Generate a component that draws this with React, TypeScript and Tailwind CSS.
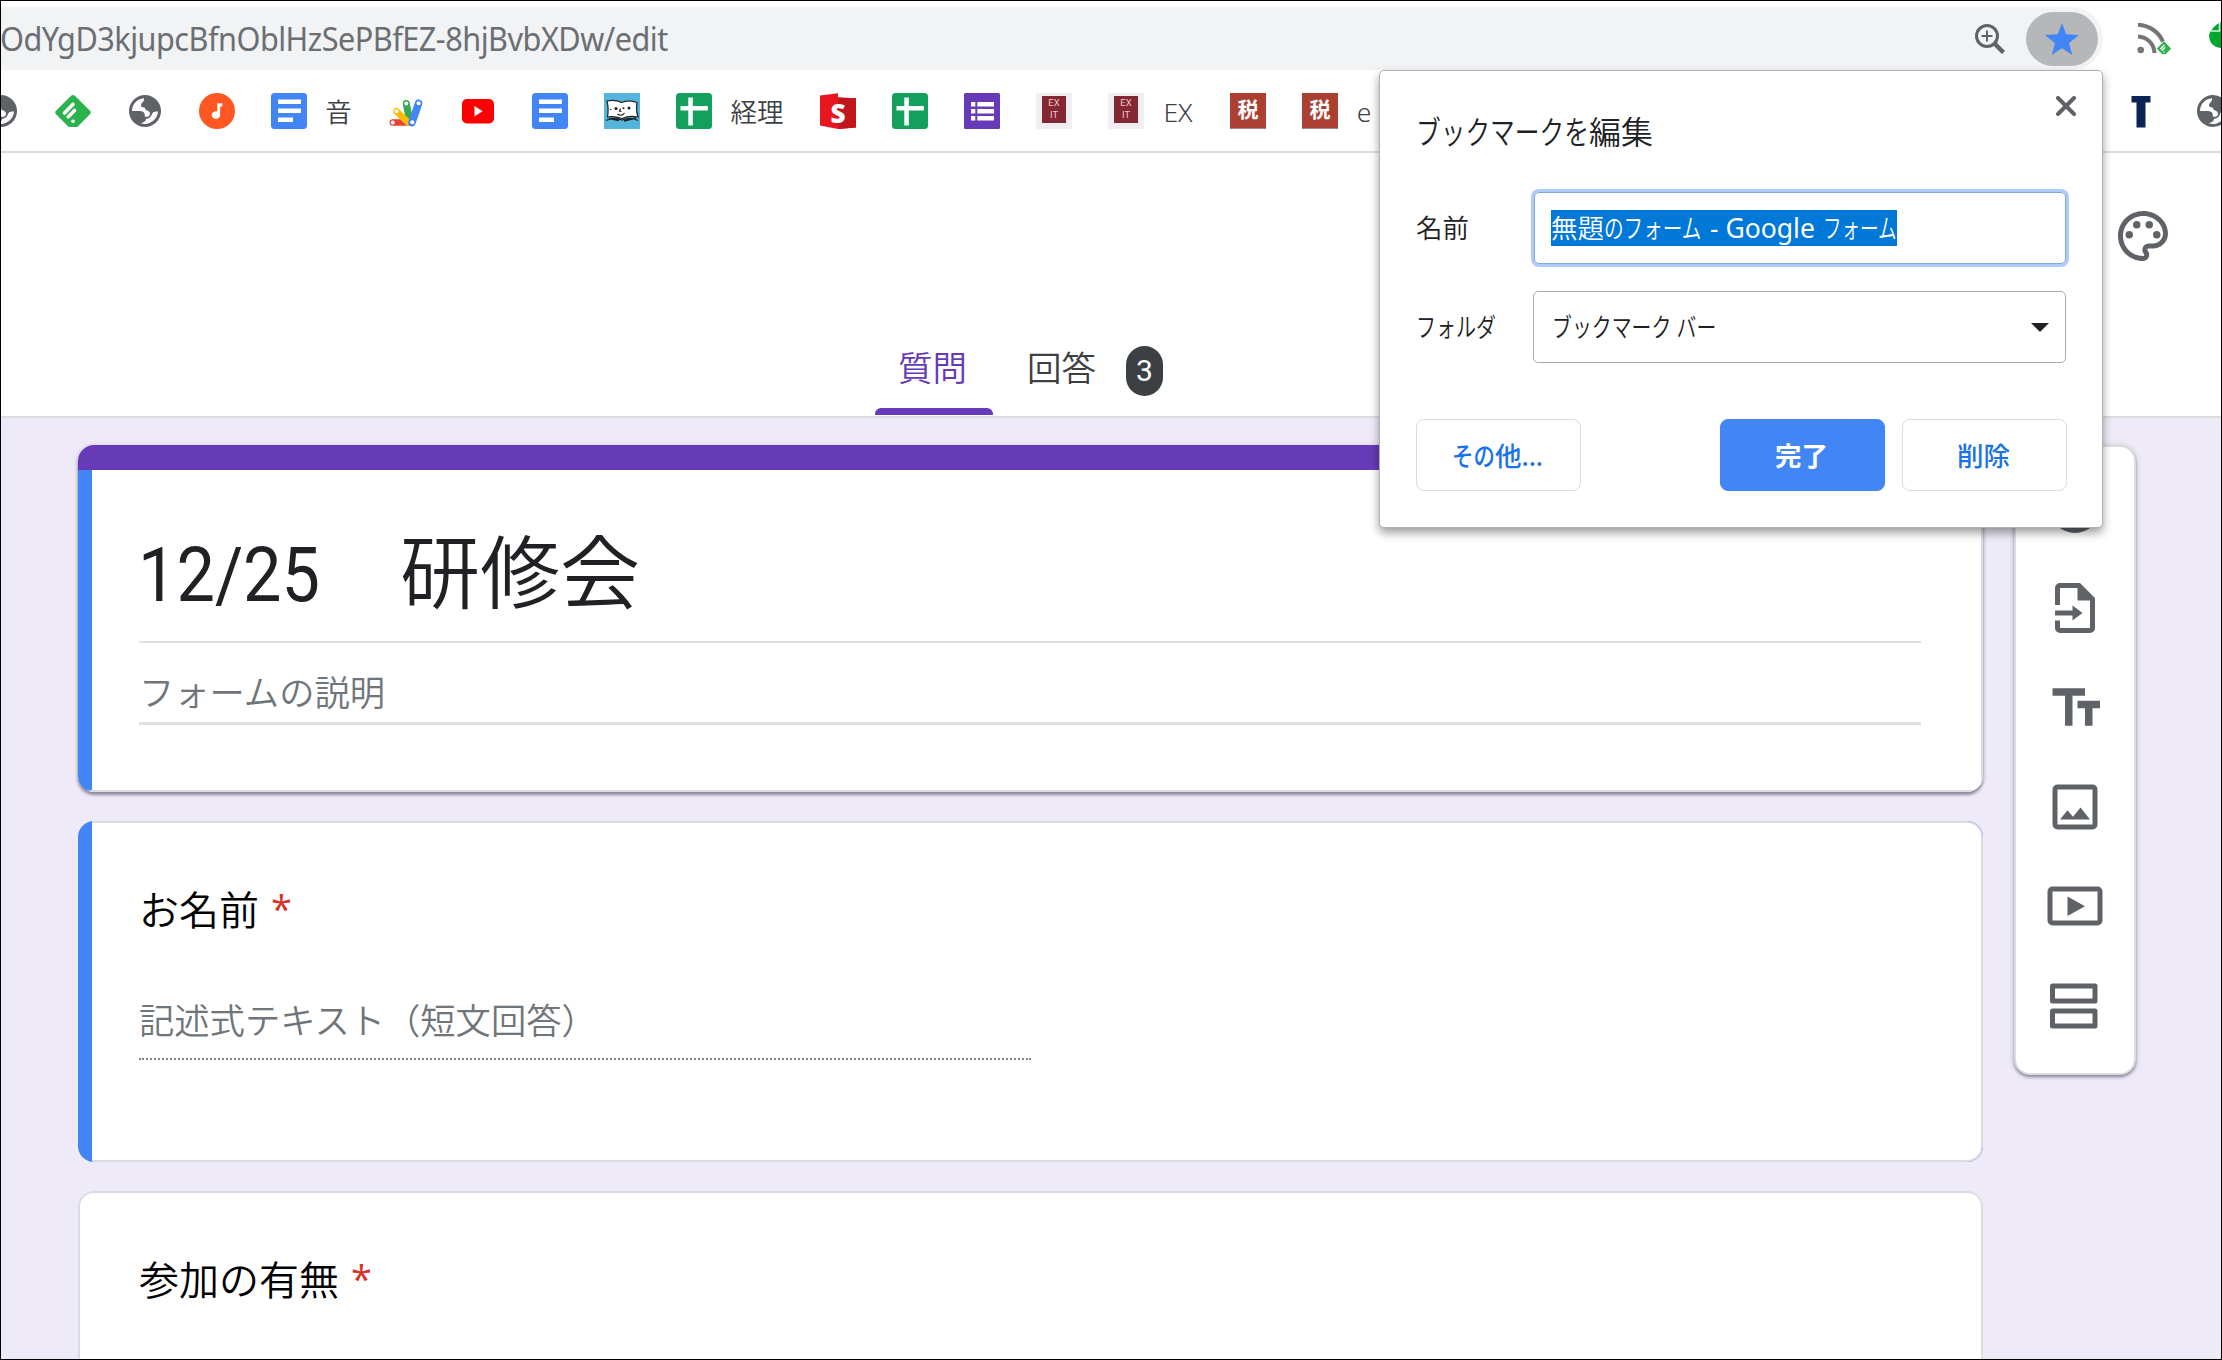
import type { ReactNode } from "react";
import clsx from "clsx";

function GlobeIcon() {
  return (
    <svg viewBox="0 0 36 36" className="size-9">
      <circle cx="18" cy="18" r="16" fill="#5f6368" />
      <path
        d="M17 5.200C10 5.800 5.200 11 5 18h7.500c3.300 0 5.300 1.400 5.300 4.200v1.600h2.400c2.600 0 3.600-3.200 2-5-1.400-1.600-4-1-4-3.200s-4.200-.4-4.200-3.400c0-2.600 3.600-3.200 3-7z"
        fill="#fff"
      />
      <path
        d="M31 18.500c-.2 6.200-5.400 11.800-12.400 12.500-1.600 0-3.600-.2-4.600-.8l3.400-1.400c1.400-.6 1-2.600 2.200-3 2.600-.8 4.800-2 5.200-4.400.4-2.200 3-3.400 6.200-2.900z"
        fill="#fff"
      />
    </svg>
  );
}

function FeedlyIcon({ className = "size-9" }: { className?: string }) {
  return (
    <svg viewBox="0 0 36 36" className={className}>
      <path
        d="M15.600 3.200a3.500 3.500 0 0 1 4.800 0L35 17.800a2.500 2.500 0 0 1 0 3.400L22.800 33.400a2.500 2.500 0 0 1-1.800.7h-6a2.500 2.500 0 0 1-1.800-.7L1 21.200a2.500 2.500 0 0 1 0-3.400z"
        fill="#2bb24c"
      />
      <g stroke="#fff" strokeWidth="3.600" strokeLinecap="round">
        <path d="M9.500 20 18 11.200" />
        <path d="M13.300 23.800 19.500 17.500" />
        <path d="M18 28.200h.1" />
      </g>
    </svg>
  );
}

function MusicIcon() {
  return (
    <svg viewBox="0 0 36 36" className="size-9">
      <circle cx="18" cy="18" r="18" fill="#ff5722" />
      <path d="M18.300 10.200h5v3.400h-2.200v8.600a4.200 3.800 0 1 1-2.800-3.600z" fill="#fff" />
    </svg>
  );
}

function DocsIcon() {
  return (
    <svg viewBox="0 0 36 36" className="size-9">
      <rect width="36" height="36" rx="3.500" fill="#4285f4" />
      <path d="M7 6.500h23v4.500H7zM7 15.500h23V20H7zM7 24.500h15V29H7z" fill="#fff" />
    </svg>
  );
}

function AppsScriptIcon() {
  return (
    <svg viewBox="0 0 36 36" className="size-9" strokeLinecap="round">
      <path d="M4.800 29.600H20" stroke="#ea4335" strokeWidth="6.500" />
      <path d="m18.300 10.500 3 16" stroke="#34a853" strokeWidth="7" />
      <path d="m8.500 18.300 12 11.500" stroke="#fbbc04" strokeWidth="6.500" />
      <path d="M30.600 10.200 24 29.600" stroke="#4285f4" strokeWidth="7.500" />
      <g fill="#fff">
        <circle cx="4.800" cy="29.600" r="2" />
        <circle cx="8.500" cy="18.300" r="2" />
        <circle cx="18.300" cy="10.500" r="2" />
        <circle cx="30.600" cy="10.300" r="2" />
        <circle cx="24.300" cy="29.300" r="2" />
      </g>
    </svg>
  );
}

function YoutubeIcon() {
  return (
    <svg viewBox="0 0 36 36" className="size-9">
      <rect x="2" y="6" width="32" height="24.500" rx="5" fill="#f00" />
      <path d="M14.500 13v10.500l8.200-5.200z" fill="#fff" />
    </svg>
  );
}

function BookIcon() {
  return (
    <svg viewBox="0 0 36 36" className="size-9">
      <path fill="#54b4dc" d="M0 0h36v36H0z" />
      <path
        d="M3 8c5-1.200 10-.8 14.500 1.500C22 7.500 27 7 33 9.500c-.8 4.500-.8 9 1 14.500-5-1-11-1-16 1.500-5-1.800-10-2.500-14.500-1.500C4.500 18 4.300 13 3 8z"
        fill="#fff"
        stroke="#222"
        strokeWidth="1.200"
      />
      <path
        d="M2 27.500c5-2.500 11-2.500 16-.5 5-2 11-2.500 16 .5M5 25.500l10 2M20 28l12-3"
        fill="none"
        stroke="#222"
        strokeWidth="1.300"
      />
      <path d="M16.500 15.500l-1 2.500 2 .5M13.500 21c2.500 2 5.500 1.500 7-1" fill="none" stroke="#222" strokeWidth="1.200" />
      <g fill="#222">
        <circle cx="12" cy="15.500" r="1.500" />
        <circle cx="25" cy="15" r="1.500" />
        <circle cx="6.800" cy="16.500" r=".7" />
        <circle cx="19.500" cy="15.200" r="1" />
      </g>
    </svg>
  );
}

function SheetsIcon() {
  return (
    <svg viewBox="0 0 36 36" className="size-9">
      <rect width="36" height="36" rx="3.500" fill="#12a05c" />
      <path d="M12.300 4.500h4.500v8.500h15v4.500h-15v15h-4.500v-15H4.500V13h7.800z" fill="#fff" />
    </svg>
  );
}

function SketchIcon() {
  return (
    <div className="grid size-9 place-items-center *:col-start-1 *:row-start-1">
      <svg viewBox="0 0 36 36" className="size-9">
        <path d="M0 2.500 18 .3v4.300L36 5.200V34.500L18 36 0 32.500z" fill="#e8171f" />
        <path d="M18 4.600 36 5.200V34.500L18 36z" fill="#c0171f" />
      </svg>
      <span className="relative pt-1 font-['Noto_Sans'] text-[26px] leading-8 font-black text-white">S</span>
    </div>
  );
}

function FormsIcon() {
  return (
    <svg viewBox="0 0 36 36" className="size-9">
      <rect width="36" height="36" rx="1.500" fill="#673ab7" />
      <path
        d="M7 9h4.300v4.500H7zM13.300 9H30v4.500H13.300zM7 16h4.300v4.500H7zM13.300 16H30v4.500H13.300zM7 23h4.300v4.500H7zM13.300 23H30v4.500H13.300z"
        fill="#fff"
      />
    </svg>
  );
}

function ExitIcon() {
  return (
    <div className="flex size-9 justify-center bg-[#f1eff1] pt-[3px]">
      <div className="h-[27px] w-6 bg-[#832833] pt-px text-center font-['Roboto'] text-[9.5px] leading-[12.5px] text-[#f3c4c8]">
        <div>EX</div>
        <div>IT</div>
      </div>
    </div>
  );
}

function TaxIcon() {
  return (
    <div className="flex size-9 items-center justify-center border-b border-[#9c8a86] bg-[#ab4032] font-['Noto_Sans_CJK_JP'] text-[21px] leading-none font-bold text-white">
      <span className="-mt-1">税</span>
    </div>
  );
}

function LetterTIcon() {
  return (
    <svg viewBox="0 0 36 36" className="size-9">
      <path d="M8.500 3h19v6.500h-5V34.500h-9V9.500h-5z" fill="#0b2355" />
    </svg>
  );
}

const bookmarks: { icon: ReactNode; label?: string; labelWidth?: string }[] = [
  { icon: <GlobeIcon /> },
  { icon: <FeedlyIcon /> },
  { icon: <GlobeIcon /> },
  { icon: <MusicIcon /> },
  { icon: <DocsIcon />, label: "音", labelWidth: "w-[27px]" },
  { icon: <AppsScriptIcon /> },
  { icon: <YoutubeIcon /> },
  { icon: <DocsIcon /> },
  { icon: <BookIcon /> },
  { icon: <SheetsIcon />, label: "経理", labelWidth: "w-[54px]" },
  { icon: <SketchIcon /> },
  { icon: <SheetsIcon /> },
  { icon: <FormsIcon /> },
  { icon: <ExitIcon /> },
  { icon: <ExitIcon />, label: "EX", labelWidth: "w-8" },
  { icon: <TaxIcon /> },
  { icon: <TaxIcon />, label: "e", labelWidth: "w-4" },
];

function AddressBar() {
  return (
    <div className="flex h-[70px] shrink-0 items-center pt-[7px]">
      <div className="flex h-[63px] w-[2103px] shrink-0 items-center rounded-r-full bg-[#f1f3f4] pr-[5px]">
        <span className="origin-left scale-x-[0.929] text-[33px] leading-none tracking-[-0.55px] whitespace-nowrap text-[#6b6e72]">
          OdYgD3kjupcBfnOblHzSePBfEZ-8hjBvbXDw/edit
        </span>
        <svg viewBox="0 0 32 32" className="mr-5 ml-auto size-8" fill="none" stroke="#5f6368">
          <circle cx="13" cy="13" r="10.500" strokeWidth="3" />
          <path d="M20.500 20.500 29.500 29.500" strokeWidth="4.500" />
          <path d="M13 7.500v11M7.500 13h11" strokeWidth="2" />
        </svg>
        <div className="flex h-[54px] w-[72px] items-center justify-center rounded-full bg-[#b6b7b8]">
          <svg viewBox="0 0 34 32" className="h-8 w-[34px]">
            <path d="m17 0 4.200 11.300L34 12l-10 8.200L27.300 32 17 25.300 6.700 32 10 20.200 0 12l12.800-.7z" fill="#4285f4" />
          </svg>
        </div>
      </div>
      <div className="relative ml-[33px] size-9">
        <svg viewBox="0 0 36 36" className="size-9" fill="none" stroke="#757575" strokeWidth="4">
          <circle cx="4.700" cy="29" r="3.300" fill="#757575" stroke="none" />
          <path d="M2 15.500c9 .5 16 7 16.500 16.500M2 3.800c12 .7 21 7.500 25 17" />
        </svg>
        <FeedlyIcon className="absolute right-px bottom-0.5 size-[14px]" />
      </div>
      <svg viewBox="0 0 30 28" className="mb-2 ml-[37px] h-7 w-[30px] shrink-0">
        <path d="M13 1h12v26H13C5 27 0 22 0 14 1 10 6 3 13 1z" fill="#00a82d" />
        <path d="M2 10h8.500V2" fill="none" stroke="#d5f3dc" strokeWidth="1.500" />
      </svg>
    </div>
  );
}

function BookmarksBar() {
  return (
    <div className="flex h-[83px] shrink-0 items-center border-b-2 border-[#dadce0]">
      <div className="-ml-[17px] flex items-center gap-9">
        {bookmarks.map(({ icon, label, labelWidth }, i) => (
          <div key={i} className="flex items-center gap-[18px]">
            {icon}
            {label && (
              <span
                className={clsx(
                  "pt-0.5 text-center text-[26.5px] leading-9 font-[350] whitespace-nowrap text-[#3c4043]",
                  labelWidth
                )}
              >
                {label}
              </span>
            )}
          </div>
        ))}
      </div>
      <div className="-mr-[9px] ml-auto flex gap-9">
        <LetterTIcon />
        <GlobeIcon />
      </div>
    </div>
  );
}

function FormHeader() {
  return (
    <header className="flex h-[265px] shrink-0 items-end border-b-2 border-[#dadce0] bg-white pl-[875px] text-[34.500px] leading-[50px]">
      <div className="flex h-[70px] w-[118px] flex-col items-center justify-between pb-px text-[#673ab7]">
        <span className="-mt-[3px] pr-[3px] font-[350]">質問</span>
        <div className="h-[7px] w-full rounded-t-md bg-[#673ab7]" />
      </div>
      <div className="ml-[34px] flex h-[70px] items-start">
        <span className="-mt-[3px] font-[350] text-[#3c4043]">回答</span>
        <span className="ml-[30px] flex h-[50px] w-[37px] items-center justify-center rounded-full bg-[#3c4043] font-['Roboto'] text-[30px] text-white">
          3
        </span>
      </div>
      <svg viewBox="0 0 24 24" className="mr-[49px] mb-[150px] ml-auto size-[60px]" fill="#5f6368">
        <path d="M12 22C6.490 22 2 17.510 2 12S6.490 2 12 2s10 4.040 10 9c0 3.310-2.690 6-6 6h-1.770c-.28 0-.5.22-.5.5 0 .12.05.23.13.33.41.47.64 1.060.64 1.670A2.500 2.500 0 0 1 12 22zm0-18c-4.410 0-8 3.590-8 8s3.590 8 8 8c.28 0 .5-.22.5-.5a.54.54 0 0 0-.14-.35c-.41-.46-.63-1.050-.63-1.650a2.500 2.500 0 0 1 2.500-2.500H16c2.210 0 4-1.790 4-4 0-3.860-3.590-7-8-7z" />
        <circle cx="6.500" cy="11.500" r="1.500" />
        <circle cx="9.500" cy="7.500" r="1.500" />
        <circle cx="14.500" cy="7.500" r="1.500" />
        <circle cx="17.500" cy="11.500" r="1.500" />
      </svg>
    </header>
  );
}

function QuestionTitle({ children }: { children: ReactNode }) {
  return (
    <h2 className="flex items-start text-[40px] leading-[48px] font-[350] text-black">
      {children}
      <span className="ml-3 -mt-0.5 font-['Open_Sans'] text-[38px] font-normal text-[#d93025]">*</span>
    </h2>
  );
}

function TitleCard() {
  return (
    <section className="flex h-[347px] shrink-0 flex-col overflow-hidden rounded-2xl bg-white shadow-[0_3px_3px_rgba(60,50,80,0.45),0_1px_4px_rgba(60,50,80,0.25)]">
      <div className="h-[25px] bg-[#673ab7]" />
      <div className="flex-1 border-r-2 border-b-2 border-l-14 border-[#dadce0] border-l-[#4285f4] pt-[54px] pr-[60px] pl-[47px]">
        <div className="flex h-[119px] border-b-2 border-[#e0e0e0] text-[#202124]">
          <span className="w-[261px]">
            <span className="-ml-px inline-block origin-left scale-x-[0.9] font-['Roboto'] text-[76px] leading-[103px]">
              12/25
            </span>
          </span>
          <span className="text-[80px] leading-[94px] font-[350]">研修会</span>
        </div>
        <div className="h-[82px] border-b-3 border-[#e0e0e0] pt-6 text-[35.3px] leading-[50px] font-[350] text-[#70757a]">
          フォームの説明
        </div>
      </div>
    </section>
  );
}

function NameCard() {
  return (
    <section className="flex h-[341px] shrink-0 overflow-hidden rounded-2xl bg-[#4285f4] pl-[14px]">
      <div className="flex-1 rounded-r-2xl border-y-2 border-r-2 border-[#dadce0] bg-white pt-[63px] pl-[47px]">
        <QuestionTitle>お名前</QuestionTitle>
        <div className="mt-[61px] h-[65px] w-[892px] border-b-2 border-dotted border-[#80868b] text-[35.3px] leading-[50px] font-[350] text-[#70757a]">
          記述式テキスト（短文回答）
        </div>
      </div>
    </section>
  );
}

function AttendanceCard() {
  return (
    <section className="h-[341px] shrink-0 rounded-2xl border-2 border-[#dadce0] bg-white pt-[63px] pl-[59px]">
      <QuestionTitle>参加の有無</QuestionTitle>
    </section>
  );
}

const sideIcons = [
  "M12 2a10 10 0 1 0 0 20 10 10 0 0 0 0-20zm0 18a8 8 0 1 1 0-16 8 8 0 0 1 0 16zm1-13h-2v4H7v2h4v4h2v-4h4v-2h-4z",
  "M14 2H6a2 2 0 0 0-2 2v6.800h2V4h7v5h5v11H6v-3H4v3a2 2 0 0 0 2 2h12a2 2 0 0 0 2-2V8zM4 13v2h7v2l4-3-4-3v2z",
  "M3 4.500v3h5v12h3v-12h5v-3zM22 9.500h-9v3h3v7h3v-7h3z",
  "M5 3a2 2 0 0 0-2 2v14a2 2 0 0 0 2 2h14a2 2 0 0 0 2-2V5a2 2 0 0 0-2-2zm0 2h14v14H5zM14.200 12.200l-3 3.700-2.200-2.600L6 17h12z",
  "M3 4.200a2 2 0 0 0-2 2v11.600a2 2 0 0 0 2 2h18a2 2 0 0 0 2-2V6.200a2 2 0 0 0-2-2zm0 2h18v11.600H3zM9 8.200v7.800l7-3.900z",
  "M3 3a1 1 0 0 0-1 1v6a1 1 0 0 0 1 1h17a1 1 0 0 0 1-1V4a1 1 0 0 0-1-1zm1 2h15v4H4zM3 13a1 1 0 0 0-1 1v6a1 1 0 0 0 1 1h17a1 1 0 0 0 1-1v-6a1 1 0 0 0-1-1zm1 2h15v4H4z",
];

function SideToolbar() {
  return (
    <aside className="ml-[31px] flex h-[630px] w-[122px] shrink-0 flex-col items-center gap-[39.5px] rounded-2xl border-2 border-[#dadce0] bg-white pt-[31px] shadow-[0_2px_3px_rgba(60,50,80,0.5),0_1px_6px_rgba(60,50,80,0.15)]">
      {sideIcons.map((d) => (
        <svg key={d} viewBox="0 0 24 24" className="size-[60px] shrink-0" fill="#5f6368" fillRule="evenodd">
          <path d={d} />
        </svg>
      ))}
    </aside>
  );
}

function DialogButton({ className, children }: { className: string; children: ReactNode }) {
  return (
    <button
      className={clsx(
        "flex h-[72px] w-[165px] items-center justify-center rounded-lg border pt-0.5 pr-0.5 text-[26.500px] leading-none",
        className
      )}
    >
      {children}
    </button>
  );
}

function BookmarkDialog() {
  return (
    <div className="absolute top-[70px] left-[1379px] h-[458px] w-[724px] rounded-[5px] border border-[#b0b2b5] bg-white pr-[35px] pl-9 text-[#202124] shadow-[0_5px_10px_rgba(0,0,0,0.38)]">
      <div className="flex justify-between">
        <h1 className="flex pt-[38px] text-[32px] leading-[46px] font-[350]">
          <span className="w-[173px] origin-left scale-x-[0.772] whitespace-nowrap">ブックマークを</span>
          編集
        </h1>
        <svg viewBox="0 0 20 20" className="mt-[25px] -mr-[9px] size-5" stroke="#5f6368" strokeWidth="4" strokeLinecap="round">
          <path d="m2 2 16 16M18 2 2 18" />
        </svg>
      </div>

      <div className="mt-[37px] flex items-center text-[26.500px] leading-9">
        <label className="w-[118px] font-[350]">名前</label>
        <div className="flex h-[72px] w-[532px] items-center rounded-[5px] border border-[#85a6e0] pl-4 ring-3 ring-[#aecbfa]">
          <div className="flex h-9 w-[346px] bg-[#0078d7] font-[350] whitespace-nowrap text-white">
            無題
            <span className="w-[98px] origin-left scale-x-[0.74]">のフォーム</span>
            <span className="w-[121px] pl-2 font-normal">- Google</span>
            <span className="w-[74px] origin-left scale-x-[0.7]">フォーム</span>
          </div>
        </div>
      </div>

      <div className="mt-[27px] flex items-center text-[26px] leading-9 font-[350]">
        <label className="w-[117px]">
          <span className="inline-block origin-left scale-x-[0.77]">フォルダ</span>
        </label>
        <div className="flex h-[72px] w-[533px] items-center justify-between rounded-[5px] border border-[#a8aaad] pr-[16px] pl-[18px]">
          <span className="origin-left scale-x-[0.765]">ブックマーク バー</span>
          <svg viewBox="0 0 18 9" className="h-[9px] w-[18px]">
            <path d="M0 0h18l-9 9z" fill="#202124" />
          </svg>
        </div>
      </div>

      <div className="mt-14 flex">
        <DialogButton className="border-[#dadce0] font-medium text-[#1a73e8]">
          <span className="w-[43px] origin-left scale-x-[0.81] whitespace-nowrap">その</span>他...
        </DialogButton>
        <DialogButton className="mr-[17px] ml-auto border-[#4285f4] bg-[#4285f4] font-bold text-white">完了</DialogButton>
        <DialogButton className="border-[#dadce0] font-medium text-[#1a73e8]">削除</DialogButton>
      </div>
    </div>
  );
}

export default function App() {
  return (
    <div className="relative flex h-[1360px] w-[2222px] flex-col overflow-hidden bg-white font-['Noto_Sans','Noto_Sans_CJK_JP',sans-serif]">
      <AddressBar />
      <BookmarksBar />
      <FormHeader />
      <main className="flex flex-1 items-start overflow-hidden bg-[#eeeaf7] pt-[27px] pl-[78px]">
        <div className="flex w-[1905px] shrink-0 flex-col gap-[29px]">
          <TitleCard />
          <NameCard />
          <AttendanceCard />
        </div>
        <SideToolbar />
      </main>
      <BookmarkDialog />
      {/* Window frame */}
      <div className="pointer-events-none absolute inset-0 border border-black" />
    </div>
  );
}
